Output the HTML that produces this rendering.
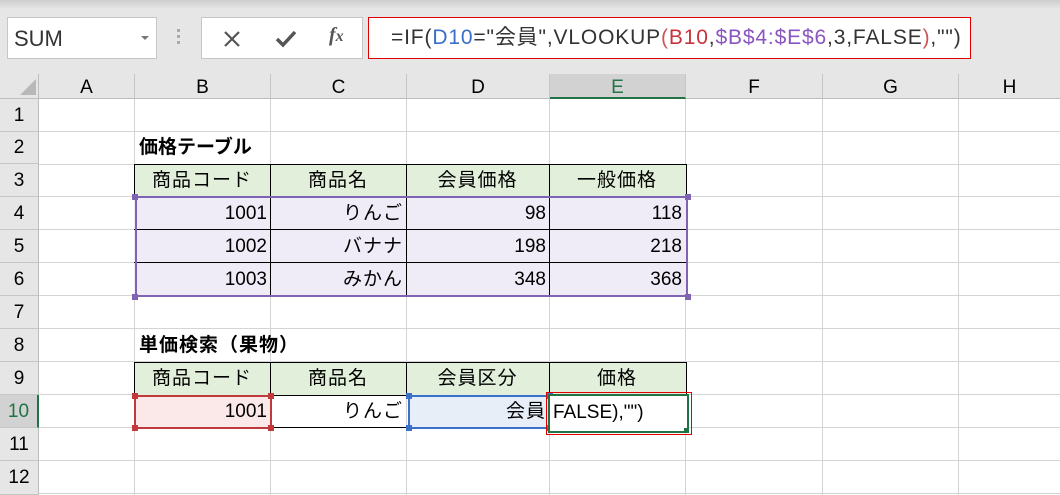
<!DOCTYPE html>
<html><head><meta charset="utf-8"><style>
*{margin:0;padding:0;box-sizing:border-box}
body{width:1060px;height:495px;overflow:hidden;background:#fff;font-family:"Liberation Sans","Noto Sans CJK JP",sans-serif;position:relative}
.a{position:absolute}
.top{left:0;top:0;width:1060px;height:74px;background:linear-gradient(#cecece,#e6e6e6 9px,#e6e6e6)}
.hl{background:#d4d4d4;position:absolute}
.ch{position:absolute;top:74px;height:25px;background:#e6e6e6;border-right:1px solid #c6c6c6;border-bottom:1px solid #bdbdbd;font-size:19px;text-align:center;line-height:27px;color:#000}
.rh{position:absolute;left:0;width:39px;background:#e6e6e6;border-right:1px solid #bdbdbd;border-bottom:1px solid #c6c6c6;font-size:19px;text-align:center;color:#000}
.c{position:absolute;font-size:19px;line-height:33px;color:#000;white-space:nowrap}
.j{letter-spacing:1px}
.r{text-align:right;padding-right:3px}
.m{text-align:center}
.h{position:absolute;width:6px;height:6px}
</style></head><body>
<div class="a top"></div>
<div class="a" style="left:7px;top:17px;width:150px;height:42px;background:#fff;border:1px solid #c6c6c6;font-size:22px;line-height:42px;padding-left:6px;color:#333">SUM</div>
<div class="a" style="left:141px;top:36px;width:0;height:0;border-left:4px solid transparent;border-right:4px solid transparent;border-top:4px solid #777"></div>
<div class="a" style="left:177px;top:29px;width:3px;height:3px;background:#aaa;box-shadow:0 6px 0 #aaa,0 12px 0 #aaa"></div>
<div class="a" style="left:201px;top:17px;width:162px;height:42px;background:#fff;border:1px solid #c6c6c6"></div>
<svg class="a" style="left:222px;top:29px" width="20" height="20"><path d="M3 3L17 17M17 3L3 17" stroke="#555" stroke-width="2.2"/></svg>
<svg class="a" style="left:274px;top:29px" width="24" height="20"><path d="M3 10L9 16L21 3" stroke="#555" stroke-width="3.5" fill="none"/></svg>
<div class="a" style="left:329px;top:24px;font-family:'Liberation Serif',serif;font-style:italic;font-weight:bold;font-size:20px;color:#555">f<span style="font-size:16px">x</span></div>
<div class="a" style="left:368px;top:17px;width:603px;height:42px;background:#fff;border:1px solid #e00000;font-size:21px;line-height:40px;padding-left:22px;color:#333;white-space:nowrap;letter-spacing:0.85px">=IF(<span style="color:#3a6fc9">D10</span>="会員",VLOOKUP<span style="color:#c55">(</span><span style="color:#c8323c">B10</span>,<span style="color:#8a55c0">$B$4:$E$6</span>,3,FALSE<span style="color:#c55">)</span>,"")</div>
<div class="a" style="left:0;top:74px;width:39px;height:25px;background:#e6e6e6;border-right:1px solid #bdbdbd;border-bottom:1px solid #bdbdbd"></div>
<div class="a" style="left:20px;top:79px;width:0;height:0;border-left:16px solid transparent;border-bottom:16px solid #b8b8b8"></div>
<div class="ch" style="left:39px;width:96px">A</div>
<div class="ch" style="left:135px;width:136px">B</div>
<div class="ch" style="left:271px;width:136px">C</div>
<div class="ch" style="left:407px;width:143px">D</div>
<div class="ch" style="left:550px;width:136px;background:#d2d2d2;color:#217346;border-bottom:2px solid #217346">E</div>
<div class="ch" style="left:686px;width:137px">F</div>
<div class="ch" style="left:823px;width:136px">G</div>
<div class="ch" style="left:959px;width:101px;border-right:none">H</div>
<div class="rh" style="top:99px;height:33px;line-height:33px">1</div>
<div class="rh" style="top:132px;height:32px;line-height:32px">2</div>
<div class="rh" style="top:164px;height:33px;line-height:33px">3</div>
<div class="rh" style="top:197px;height:33px;line-height:33px">4</div>
<div class="rh" style="top:230px;height:33px;line-height:33px">5</div>
<div class="rh" style="top:263px;height:33px;line-height:33px">6</div>
<div class="rh" style="top:296px;height:33px;line-height:33px">7</div>
<div class="rh" style="top:329px;height:33px;line-height:33px">8</div>
<div class="rh" style="top:362px;height:33px;line-height:33px">9</div>
<div class="rh" style="top:395px;height:33px;line-height:33px;background:#d2d2d2;color:#217346;border-right:2px solid #217346">10</div>
<div class="rh" style="top:428px;height:33px;line-height:33px">11</div>
<div class="rh" style="top:461px;height:34px;line-height:33px">12</div>
<div class="hl" style="left:134px;top:99px;width:1px;height:396px"></div>
<div class="hl" style="left:270px;top:99px;width:1px;height:396px"></div>
<div class="hl" style="left:406px;top:99px;width:1px;height:396px"></div>
<div class="hl" style="left:549px;top:99px;width:1px;height:396px"></div>
<div class="hl" style="left:685px;top:99px;width:1px;height:396px"></div>
<div class="hl" style="left:822px;top:99px;width:1px;height:396px"></div>
<div class="hl" style="left:958px;top:99px;width:1px;height:396px"></div>
<div class="hl" style="left:39px;top:131px;width:1021px;height:1px"></div>
<div class="hl" style="left:39px;top:164px;width:1021px;height:1px"></div>
<div class="hl" style="left:39px;top:196px;width:1021px;height:1px"></div>
<div class="hl" style="left:39px;top:229px;width:1021px;height:1px"></div>
<div class="hl" style="left:39px;top:262px;width:1021px;height:1px"></div>
<div class="hl" style="left:39px;top:295px;width:1021px;height:1px"></div>
<div class="hl" style="left:39px;top:328px;width:1021px;height:1px"></div>
<div class="hl" style="left:39px;top:361px;width:1021px;height:1px"></div>
<div class="hl" style="left:39px;top:394px;width:1021px;height:1px"></div>
<div class="hl" style="left:39px;top:427px;width:1021px;height:1px"></div>
<div class="hl" style="left:39px;top:460px;width:1021px;height:1px"></div>
<div class="hl" style="left:39px;top:493px;width:1021px;height:1px"></div>
<div class="c" style="left:139px;top:131px;font-weight:bold">価格テーブル</div>
<div class="a" style="left:134px;top:164px;width:553px;height:33px;background:#e2efda;border:1px solid #000"></div>
<div class="a" style="left:134px;top:197px;width:553px;height:99px;background:#efebf7"></div>
<div class="a" style="left:270px;top:164px;width:1px;height:132px;background:#000"></div>
<div class="a" style="left:406px;top:164px;width:1px;height:132px;background:#000"></div>
<div class="a" style="left:549px;top:164px;width:1px;height:132px;background:#000"></div>
<div class="a" style="left:134px;top:229px;width:553px;height:1px;background:#000"></div>
<div class="a" style="left:134px;top:262px;width:553px;height:1px;background:#000"></div>
<div class="a" style="left:135px;top:196px;width:553px;height:101px;border:2px solid #8064b4"></div>
<div class="h" style="left:132px;top:194px;background:#8064b4"></div><div class="h" style="left:685px;top:194px;background:#8064b4"></div>
<div class="h" style="left:132px;top:294px;background:#8064b4"></div><div class="h" style="left:685px;top:294px;background:#8064b4"></div>
<div class="c m j" style="left:134px;top:164px;width:136px">商品コード</div>
<div class="c m j" style="left:270px;top:164px;width:136px">商品名</div>
<div class="c m j" style="left:406px;top:164px;width:143px">会員価格</div>
<div class="c m j" style="left:549px;top:164px;width:136px">一般価格</div>
<div class="c r" style="left:134px;top:197px;width:136px">1001</div>
<div class="c r j" style="left:270px;top:197px;width:136px">りんご</div>
<div class="c r" style="left:406px;top:197px;width:143px">98</div>
<div class="c r" style="left:549px;top:197px;width:136px">118</div>
<div class="c r" style="left:134px;top:230px;width:136px">1002</div>
<div class="c r j" style="left:270px;top:230px;width:136px">バナナ</div>
<div class="c r" style="left:406px;top:230px;width:143px">198</div>
<div class="c r" style="left:549px;top:230px;width:136px">218</div>
<div class="c r" style="left:134px;top:263px;width:136px">1003</div>
<div class="c r j" style="left:270px;top:263px;width:136px">みかん</div>
<div class="c r" style="left:406px;top:263px;width:143px">348</div>
<div class="c r" style="left:549px;top:263px;width:136px">368</div>
<div class="c j" style="left:139px;top:329px;font-weight:bold">単価検索（果物）</div>
<div class="a" style="left:134px;top:362px;width:553px;height:34px;background:#e2efda;border:1px solid #000"></div>
<div class="a" style="left:270px;top:362px;width:1px;height:66px;background:#000"></div>
<div class="a" style="left:406px;top:362px;width:1px;height:33px;background:#000"></div>
<div class="a" style="left:549px;top:362px;width:1px;height:33px;background:#000"></div>
<div class="a" style="left:270px;top:427px;width:140px;height:1px;background:#000"></div>
<div class="a" style="left:134px;top:395px;width:138px;height:34px;background:#fbe9e9;border:2px solid #c0393b"></div>
<div class="h" style="left:132px;top:393px;background:#c0393b"></div><div class="h" style="left:268px;top:393px;background:#c0393b"></div>
<div class="h" style="left:132px;top:425px;background:#c0393b"></div><div class="h" style="left:268px;top:425px;background:#c0393b"></div>
<div class="a" style="left:408px;top:395px;width:142px;height:34px;background:#e8eef8;border:2px solid #3a72c9"></div>
<div class="h" style="left:406px;top:393px;background:#3a72c9"></div><div class="h" style="left:547px;top:393px;background:#3a72c9"></div>
<div class="h" style="left:406px;top:425px;background:#3a72c9"></div><div class="h" style="left:547px;top:425px;background:#3a72c9"></div>
<div class="a" style="left:546px;top:392px;width:146px;height:43px;border:1px solid #e00000"></div>
<div class="a" style="left:548px;top:394px;width:141px;height:39px;border:2px solid #217346;background:#fff"></div>
<div class="h" style="left:684px;top:428px;background:#217346;width:5px;height:5px"></div>
<div class="c m j" style="left:134px;top:362px;width:136px">商品コード</div>
<div class="c m j" style="left:270px;top:362px;width:136px">商品名</div>
<div class="c m j" style="left:406px;top:362px;width:143px">会員区分</div>
<div class="c m j" style="left:549px;top:362px;width:136px">価格</div>
<div class="c r" style="left:134px;top:395px;width:136px">1001</div>
<div class="c r j" style="left:270px;top:395px;width:136px">りんご</div>
<div class="c r j" style="left:406px;top:395px;width:143px">会員</div>
<div class="c" style="left:553px;top:396px">FALSE),"")</div>
</body></html>
